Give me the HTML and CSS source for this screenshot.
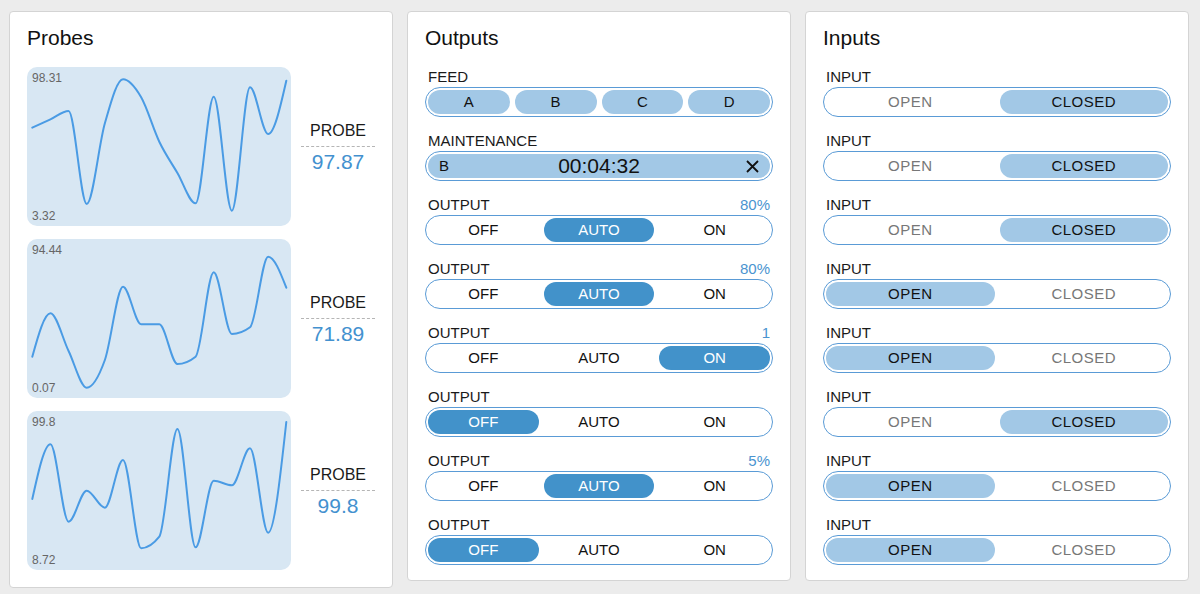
FILE: index.html
```html
<!DOCTYPE html>
<html lang="en">
<head>
<meta charset="utf-8">
<title>Dashboard</title>
<link rel="stylesheet" href="styles.css">
</head>
<body>
<div class="dashboard">
  <section class="panel probes">
    <h2 class="panel-title">Probes</h2>
    <div class="probe-list">
      <div class="probe">
        <div class="chart">
          <span class="chart-max">98.31</span>
          <span class="chart-min">3.32</span>
          <svg class="spark" viewBox="0 0 264 159" data-points="60.7 52.4 44 137 56.3 12.3 30.3 74.7 106 136.3 29.7 143.7 20.3 67 13.7"><path class="spark-line" d=""/></svg>
        </div>
        <div class="probe-info">
          <div class="probe-name">PROBE</div>
          <div class="probe-value">97.87</div>
        </div>
      </div>
      <div class="probe">
        <div class="chart">
          <span class="chart-max">94.44</span>
          <span class="chart-min">0.07</span>
          <svg class="spark" viewBox="0 0 264 159" data-points="117.7 74.3 112 148.7 121 47.7 85.3 85.3 125 117.7 33.3 95 88.3 17.7 48.7"><path class="spark-line" d=""/></svg>
        </div>
        <div class="probe-info">
          <div class="probe-name">PROBE</div>
          <div class="probe-value">71.89</div>
        </div>
      </div>
      <div class="probe">
        <div class="chart">
          <span class="chart-max">99.8</span>
          <span class="chart-min">8.72</span>
          <svg class="spark" viewBox="0 0 264 159" data-points="88 33.3 110.7 79.7 96.7 49 137.3 125.7 18 136.3 69.7 74.3 37.3 121.7 11"><path class="spark-line" d=""/></svg>
        </div>
        <div class="probe-info">
          <div class="probe-name">PROBE</div>
          <div class="probe-value">99.8</div>
        </div>
      </div>
    </div>
  </section>

  <section class="panel">
    <h2 class="panel-title">Outputs</h2>
    <div class="controls">
      <div class="control">
        <div class="control-head"><span>FEED</span></div>
        <div class="seg seg-4">
          <div class="seg-item on-light">A</div>
          <div class="seg-item on-light">B</div>
          <div class="seg-item on-light">C</div>
          <div class="seg-item on-light">D</div>
        </div>
      </div>
      <div class="control">
        <div class="control-head"><span>MAINTENANCE</span></div>
        <div class="seg">
          <div class="timer">
            <span class="timer-feed">B</span>
            <span class="timer-time">00:04:32</span>
            <svg class="timer-close" viewBox="0 0 13 13" width="13" height="13"><path d="M1 1L12 12M12 1L1 12"/></svg>
          </div>
        </div>
      </div>
      <div class="control">
        <div class="control-head"><span>OUTPUT</span><span class="control-value">80%</span></div>
        <div class="seg seg-3">
          <div class="seg-item">OFF</div>
          <div class="seg-item on-dark">AUTO</div>
          <div class="seg-item">ON</div>
        </div>
      </div>
      <div class="control">
        <div class="control-head"><span>OUTPUT</span><span class="control-value">80%</span></div>
        <div class="seg seg-3">
          <div class="seg-item">OFF</div>
          <div class="seg-item on-dark">AUTO</div>
          <div class="seg-item">ON</div>
        </div>
      </div>
      <div class="control">
        <div class="control-head"><span>OUTPUT</span><span class="control-value">1</span></div>
        <div class="seg seg-3">
          <div class="seg-item">OFF</div>
          <div class="seg-item">AUTO</div>
          <div class="seg-item on-dark">ON</div>
        </div>
      </div>
      <div class="control">
        <div class="control-head"><span>OUTPUT</span></div>
        <div class="seg seg-3">
          <div class="seg-item on-dark">OFF</div>
          <div class="seg-item">AUTO</div>
          <div class="seg-item">ON</div>
        </div>
      </div>
      <div class="control">
        <div class="control-head"><span>OUTPUT</span><span class="control-value">5%</span></div>
        <div class="seg seg-3">
          <div class="seg-item">OFF</div>
          <div class="seg-item on-dark">AUTO</div>
          <div class="seg-item">ON</div>
        </div>
      </div>
      <div class="control">
        <div class="control-head"><span>OUTPUT</span></div>
        <div class="seg seg-3">
          <div class="seg-item on-dark">OFF</div>
          <div class="seg-item">AUTO</div>
          <div class="seg-item">ON</div>
        </div>
      </div>
    </div>
  </section>

  <section class="panel">
    <h2 class="panel-title">Inputs</h2>
    <div class="controls">
      <div class="control">
        <div class="control-head"><span>INPUT</span></div>
        <div class="seg seg-2"><div class="seg-item">OPEN</div><div class="seg-item on-light">CLOSED</div></div>
      </div>
      <div class="control">
        <div class="control-head"><span>INPUT</span></div>
        <div class="seg seg-2"><div class="seg-item">OPEN</div><div class="seg-item on-light">CLOSED</div></div>
      </div>
      <div class="control">
        <div class="control-head"><span>INPUT</span></div>
        <div class="seg seg-2"><div class="seg-item">OPEN</div><div class="seg-item on-light">CLOSED</div></div>
      </div>
      <div class="control">
        <div class="control-head"><span>INPUT</span></div>
        <div class="seg seg-2"><div class="seg-item on-light">OPEN</div><div class="seg-item">CLOSED</div></div>
      </div>
      <div class="control">
        <div class="control-head"><span>INPUT</span></div>
        <div class="seg seg-2"><div class="seg-item on-light">OPEN</div><div class="seg-item">CLOSED</div></div>
      </div>
      <div class="control">
        <div class="control-head"><span>INPUT</span></div>
        <div class="seg seg-2"><div class="seg-item">OPEN</div><div class="seg-item on-light">CLOSED</div></div>
      </div>
      <div class="control">
        <div class="control-head"><span>INPUT</span></div>
        <div class="seg seg-2"><div class="seg-item on-light">OPEN</div><div class="seg-item">CLOSED</div></div>
      </div>
      <div class="control">
        <div class="control-head"><span>INPUT</span></div>
        <div class="seg seg-2"><div class="seg-item on-light">OPEN</div><div class="seg-item">CLOSED</div></div>
      </div>
    </div>
  </section>
</div>
<script src="script.js"></script>
</body>
</html>
```

FILE: styles.css
```css
* { box-sizing: border-box; }
html, body { margin: 0; }
body {
  background: #ececec;
  font-family: "Liberation Sans", Arial, Helvetica, sans-serif;
  color: #1a1a1a;
}
.dashboard {
  display: flex;
  align-items: flex-start;
  gap: 14px;
  padding: 11px 0 0 9px;
}
.panel {
  width: 384px;
  flex: none;
  background: #fff;
  border: 1px solid #d4d4d4;
  border-radius: 4px;
  padding: 14px 17px 15px;
}
.probes { padding-bottom: 17px; }
.panel-title {
  margin: 0 0 17px;
  font-size: 21px;
  line-height: 24px;
  font-weight: normal;
  color: #111;
}

/* probes */
.probe-list { display: flex; flex-direction: column; gap: 13px; }
.probe { display: flex; align-items: center; }
.chart {
  position: relative;
  flex: none;
  width: 264px;
  height: 159px;
  background: #d8e7f3;
  border-radius: 10px;
}
.spark { display: block; width: 264px; height: 159px; position: relative; }
.spark-line {
  fill: none;
  stroke: #4a9be4;
  stroke-width: 2;
  stroke-linejoin: round;
  stroke-linecap: round;
}
.chart-max, .chart-min {
  position: absolute;
  left: 5px;
  font-size: 12px;
  line-height: 14px;
  color: #666;
}
.chart-max { top: 4px; }
.chart-min { bottom: 3px; }
.probe-info {
  width: 75px;
  margin: 3px 0 0 10px;
  text-align: center;
}
.probe-name {
  font-size: 16px;
  line-height: 18px;
  padding-bottom: 6px;
  border-bottom: 1px dashed #b5b5b5;
  color: #1a1a1a;
}
.probe-value {
  font-size: 21px;
  line-height: 24px;
  padding-top: 3px;
  color: #4391cf;
}

/* controls */
.controls { display: flex; flex-direction: column; gap: 14px; }
.control-head {
  display: flex;
  justify-content: space-between;
  padding: 0 3px;
  font-size: 15px;
  line-height: 20px;
  color: #1a1a1a;
}
.control-value { color: #4a94d0; }
.seg {
  display: grid;
  gap: 5px;
  padding: 2px;
  border: 1px solid #5a9bd6;
  border-radius: 15px;
  background: #fff;
}
.seg-4 { grid-template-columns: repeat(4, 1fr); }
.seg-3 { grid-template-columns: repeat(3, 1fr); }
.seg-2 { grid-template-columns: repeat(2, 1fr); }
.seg-item {
  height: 24px;
  line-height: 24px;
  text-align: center;
  font-size: 15px;
  border-radius: 12px;
  color: #111;
}
.seg-item.on-light { background: #a2c8e6; }
.seg-item.on-dark { background: #4292ca; color: #fff; }
.seg-2 .seg-item { letter-spacing: 0.5px; color: #777; }
.seg-2 .seg-item.on-light { color: #111; }

.timer {
  display: grid;
  grid-template-columns: 1fr auto 1fr;
  align-items: center;
  height: 24px;
  padding: 0 11px 0 11px;
  background: #a2c8e6;
  border-radius: 12px;
  color: #111;
}
.timer-feed { font-size: 15px; line-height: 24px; }
.timer-time { font-size: 21px; line-height: 24px; }
.timer-close {
  justify-self: end;
  display: block;
  fill: none;
  stroke: #111;
  stroke-width: 1.8;
}
```

FILE: script.js
```js
(function () {
  function monotonePath(xs, ys) {
    var n = xs.length, t = new Array(n), s = [], i;
    for (i = 0; i < n - 1; i++) s.push((ys[i + 1] - ys[i]) / (xs[i + 1] - xs[i]));
    for (i = 1; i < n - 1; i++) {
      var h0 = xs[i] - xs[i - 1], h1 = xs[i + 1] - xs[i];
      var s0 = s[i - 1], s1 = s[i];
      var p = (s0 * h1 + s1 * h0) / (h0 + h1);
      var sg0 = s0 < 0 ? -1 : 1, sg1 = s1 < 0 ? -1 : 1;
      t[i] = (sg0 + sg1) * Math.min(Math.abs(s0), Math.abs(s1), 0.5 * Math.abs(p)) || 0;
    }
    t[0] = (3 * s[0] - t[1]) / 2;
    t[n - 1] = (3 * s[n - 2] - t[n - 2]) / 2;
    var d = 'M' + xs[0].toFixed(2) + ',' + ys[0].toFixed(2);
    for (i = 0; i < n - 1; i++) {
      var dx = (xs[i + 1] - xs[i]) / 3;
      d += 'C' + (xs[i] + dx).toFixed(2) + ',' + (ys[i] + dx * t[i]).toFixed(2) + ' ' +
        (xs[i + 1] - dx).toFixed(2) + ',' + (ys[i + 1] - dx * t[i + 1]).toFixed(2) + ' ' +
        xs[i + 1].toFixed(2) + ',' + ys[i + 1].toFixed(2);
    }
    return d;
  }
  var charts = document.querySelectorAll('.spark');
  for (var c = 0; c < charts.length; c++) {
    var svg = charts[c];
    var ys = svg.getAttribute('data-points').trim().split(/\s+/).map(Number);
    var x0 = 5.3, x1 = 259.3, step = (x1 - x0) / (ys.length - 1);
    var xs = ys.map(function (_, i) { return x0 + i * step; });
    svg.querySelector('.spark-line').setAttribute('d', monotonePath(xs, ys));
  }
})();
```
